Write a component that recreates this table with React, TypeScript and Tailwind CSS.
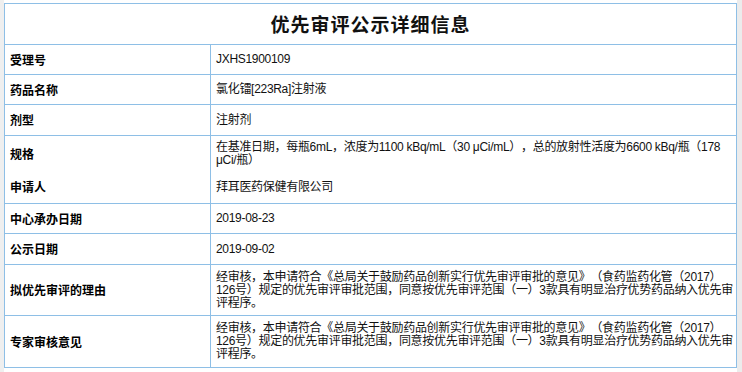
import React from "react";

interface IRow {
  label: string;
  value: string;
  h: string;
  noBorder?: boolean;
}

const rows: IRow[] = [
  { label: "受理号", value: "JXHS1900109", h: "h-[30px]" },
  { label: "药品名称", value: "氯化镭[223Ra]注射液", h: "h-[30px]" },
  { label: "剂型", value: "注射剂", h: "h-[31px]" },
  {
    label: "规格",
    value:
      "在基准日期，每瓶6mL，浓度为1100 kBq/mL（30 μCi/mL），总的放射性活度为6600 kBq/瓶（178 μCi/瓶）",
    h: "h-[35px]",
    noBorder: true,
  },
  { label: "申请人", value: "拜耳医药保健有限公司", h: "h-[33px]" },
  { label: "中心承办日期", value: "2019-08-23", h: "h-[30px]" },
  { label: "公示日期", value: "2019-09-02", h: "h-[31px]" },
  {
    label: "拟优先审评的理由",
    value:
      "经审核，本申请符合《总局关于鼓励药品创新实行优先审评审批的意见》（食药监药化管（2017）126号）规定的优先审评审批范围，同意按优先审评范围（一）3款具有明显治疗优势药品纳入优先审评程序。",
    h: "h-[51px]",
  },
  {
    label: "专家审核意见",
    value:
      "经审核，本申请符合《总局关于鼓励药品创新实行优先审评审批的意见》（食药监药化管（2017）126号）规定的优先审评审批范围，同意按优先审评范围（一）3款具有明显治疗优势药品纳入优先审评程序。",
    h: "h-[51px]",
  },
];

export default function App() {
  return (
    <div className="flex h-[372px] w-[742px] overflow-hidden bg-white font-['Liberation_Sans','Noto_Sans_CJK_SC',sans-serif] text-black">
      {/* left strip */}
      <div className="w-[4px] bg-[#efefef]"></div>

      <div className="w-[733px] pt-[3px]">
        <div className="border border-[#8ebfe6]">
          {/* title */}
          <div className="flex h-[41px] items-center justify-center border-b border-[#8ebfe6]">
            <h1 className="font-['Noto_Sans_CJK_SC',serif] text-[19px] font-bold tracking-[1px] text-[#111]">
              优先审评公示详细信息
            </h1>
          </div>

          {rows.map((row, index) => (
            <div
              key={index}
              className={`flex ${row.h} ${
                index === rows.length - 1 || row.noBorder
                  ? ""
                  : "border-b border-[#8ebfe6]"
              }`}
            >
              <div className="flex w-[206px] shrink-0 items-center border-r border-[#8ebfe6] pl-[5px] font-['Noto_Sans_CJK_SC',sans-serif] text-[12px] font-bold">
                {row.label}
              </div>
              <div className="flex flex-1 items-center pl-[5px] pr-[1px] text-[12px] leading-[13px] tracking-[-0.3px] text-[#111] [text-spacing-trim:space-all]">
                <span>{row.value}</span>
              </div>
            </div>
          ))}
        </div>
      </div>

      {/* right strip */}
      <div className="flex-1 bg-[#ececec]"></div>
    </div>
  );
}
